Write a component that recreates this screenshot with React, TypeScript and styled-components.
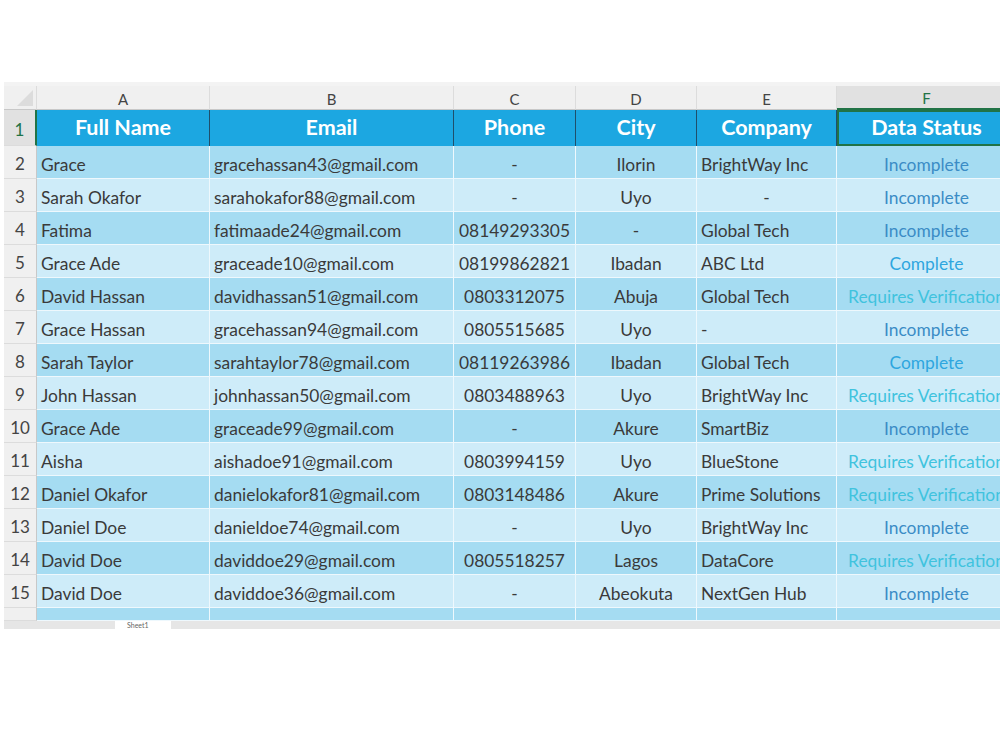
import React from 'react';
import styled, { createGlobalStyle } from 'styled-components';

type Status = 'Incomplete' | 'Complete' | 'Requires Verification';
type Align = 'left' | 'center';

interface Person {
  name: string;
  email: string;
  phone: string;
  city: string;
  company: string;
  status: Status;
}

const people: Person[] = [
  { name: 'Grace', email: 'gracehassan43@gmail.com', phone: '-', city: 'Ilorin', company: 'BrightWay Inc', status: 'Incomplete' },
  { name: 'Sarah Okafor', email: 'sarahokafor88@gmail.com', phone: '-', city: 'Uyo', company: '-', status: 'Incomplete' },
  { name: 'Fatima', email: 'fatimaade24@gmail.com', phone: '08149293305', city: '-', company: 'Global Tech', status: 'Incomplete' },
  { name: 'Grace Ade', email: 'graceade10@gmail.com', phone: '08199862821', city: 'Ibadan', company: 'ABC Ltd', status: 'Complete' },
  { name: 'David Hassan', email: 'davidhassan51@gmail.com', phone: '0803312075', city: 'Abuja', company: 'Global Tech', status: 'Requires Verification' },
  { name: 'Grace Hassan', email: 'gracehassan94@gmail.com', phone: '0805515685', city: 'Uyo', company: '-', status: 'Incomplete' },
  { name: 'Sarah Taylor', email: 'sarahtaylor78@gmail.com', phone: '08119263986', city: 'Ibadan', company: 'Global Tech', status: 'Complete' },
  { name: 'John Hassan', email: 'johnhassan50@gmail.com', phone: '0803488963', city: 'Uyo', company: 'BrightWay Inc', status: 'Requires Verification' },
  { name: 'Grace Ade', email: 'graceade99@gmail.com', phone: '-', city: 'Akure', company: 'SmartBiz', status: 'Incomplete' },
  { name: 'Aisha', email: 'aishadoe91@gmail.com', phone: '0803994159', city: 'Uyo', company: 'BlueStone', status: 'Requires Verification' },
  { name: 'Daniel Okafor', email: 'danielokafor81@gmail.com', phone: '0803148486', city: 'Akure', company: 'Prime Solutions', status: 'Requires Verification' },
  { name: 'Daniel Doe', email: 'danieldoe74@gmail.com', phone: '-', city: 'Uyo', company: 'BrightWay Inc', status: 'Incomplete' },
  { name: 'David Doe', email: 'daviddoe29@gmail.com', phone: '0805518257', city: 'Lagos', company: 'DataCore', status: 'Requires Verification' },
  { name: 'David Doe', email: 'daviddoe36@gmail.com', phone: '-', city: 'Abeokuta', company: 'NextGen Hub', status: 'Incomplete' },
];

const statusColor: Record<Status, string> = {
  Incomplete: '#3b8cc6',
  Complete: '#2ea6df',
  'Requires Verification': '#40c3de',
};

const COLS = '33px 173px 244px 122px 121px 140px 180px';

const GlobalStyle = createGlobalStyle`
  body {
    margin: 0;
    background: #ffffff;
    font-family: Lato, "Open Sans", sans-serif;
  }
`;

const Page = styled.div`
  width: 1000px;
  height: 750px;
  padding-top: 82px;
  padding-left: 4px;
  box-sizing: border-box;
  overflow: hidden;
`;

const Sheet = styled.div`
  width: 996px;
  overflow: hidden;
  background: #f3f3f3;
  padding-top: 4px;
`;

const Row = styled.div<{ $height: number }>`
  display: grid;
  grid-template-columns: ${COLS};
  height: ${(p) => p.$height}px;
  width: 1013px;
`;

const Corner = styled.div`
  position: relative;
  background: #f0f0f0;
  border-right: 1px solid #dcdcdc;
  border-bottom: 1px solid #c8c8c8;
  &::after {
    content: '';
    position: absolute;
    right: 3px;
    bottom: 3px;
    border-left: 16px solid transparent;
    border-bottom: 16px solid #dcdcdc;
  }
`;

const ColLetter = styled.div<{ $active?: boolean }>`
  display: flex;
  align-items: center;
  justify-content: center;
  padding-top: 2px;
  font-size: 15px;
  color: ${(p) => (p.$active ? '#217346' : '#444444')};
  background: ${(p) => (p.$active ? '#e1e1e1' : '#f0f0f0')};
  border-right: 1px solid #dcdcdc;
  border-bottom: ${(p) => (p.$active ? '2px solid #217346' : '1px solid #c8c8c8')};
`;

const RowNum = styled.div<{ $active?: boolean }>`
  display: flex;
  align-items: center;
  justify-content: center;
  padding-top: 3px;
  font-size: 17px;
  color: ${(p) => (p.$active ? '#217346' : '#444444')};
  background: ${(p) => (p.$active ? '#e1e1e1' : '#f0f0f0')};
  border-right: ${(p) => (p.$active ? '2px solid #217346' : '1px solid #c8c8c8')};
  border-bottom: 1px solid #dcdcdc;
  box-sizing: border-box;
`;

const HeadCell = styled.div<{ $selected?: boolean }>`
  display: flex;
  align-items: center;
  justify-content: center;
  padding-bottom: 3px;
  background: #1ca7e1;
  color: #ffffff;
  font-size: 21.5px;
  font-weight: 700;
  border-right: 1px solid #1f4f6b;
  box-sizing: border-box;
  ${(p) => (p.$selected ? 'box-shadow: inset 0 0 0 2px #217346;' : '')}
`;

const Cell = styled.div<{ $tone: 'dark' | 'light'; $align?: Align; $color?: string }>`
  display: flex;
  align-items: center;
  justify-content: ${(p) => (p.$align === 'center' ? 'center' : 'flex-start')};
  padding: 4px 4px 0;
  background: ${(p) => (p.$tone === 'dark' ? '#a5dcf2' : '#ceecf9')};
  color: ${(p) => p.$color ?? '#3a3a3a'};
  font-size: 17.4px;
  white-space: nowrap;
  overflow: hidden;
  border-right: 1px solid #eef8fd;
  border-bottom: 1px solid #eef8fd;
  box-sizing: border-box;
`;

const TabBar = styled.div`
  height: 8px;
  background: #e6e6e6;
  display: flex;
  overflow: hidden;
  padding-left: 111px;
`;

const Tab = styled.div`
  width: 56px;
  background: #ffffff;
  font-size: 7px;
  line-height: 8px;
  color: #666666;
  padding-left: 12px;
  box-sizing: border-box;
`;

const headers = ['Full Name', 'Email', 'Phone', 'City', 'Company', 'Data Status'];
const letters = ['A', 'B', 'C', 'D', 'E', 'F'];

export default function App() {
  return (
    <>
      <GlobalStyle />
      <Page>
        <Sheet>
          <Row $height={24}>
            <Corner />
            {letters.map((l) => (
              <ColLetter key={l} $active={l === 'F'}>
                {l}
              </ColLetter>
            ))}
          </Row>
          <Row $height={36}>
            <RowNum $active>1</RowNum>
            {headers.map((h) => (
              <HeadCell key={h} $selected={h === 'Data Status'}>
                {h}
              </HeadCell>
            ))}
          </Row>
          {people.map((p, i) => {
            const tone = i % 2 === 0 ? 'dark' : 'light';
            return (
              <Row key={i} $height={33}>
                <RowNum>{i + 2}</RowNum>
                <Cell $tone={tone}>{p.name}</Cell>
                <Cell $tone={tone}>{p.email}</Cell>
                <Cell $tone={tone} $align="center">{p.phone}</Cell>
                <Cell $tone={tone} $align="center">{p.city}</Cell>
                <Cell $tone={tone} $align={i === 1 ? 'center' : 'left'}>{p.company}</Cell>
                <Cell $tone={tone} $align="center" $color={statusColor[p.status]}>
                  {p.status}
                </Cell>
              </Row>
            );
          })}
          <Row $height={13}>
            <RowNum />
            {letters.map((l) => (
              <Cell key={l} $tone="dark" />
            ))}
          </Row>
          <TabBar>
            <Tab>Sheet1</Tab>
          </TabBar>
        </Sheet>
      </Page>
    </>
  );
}
